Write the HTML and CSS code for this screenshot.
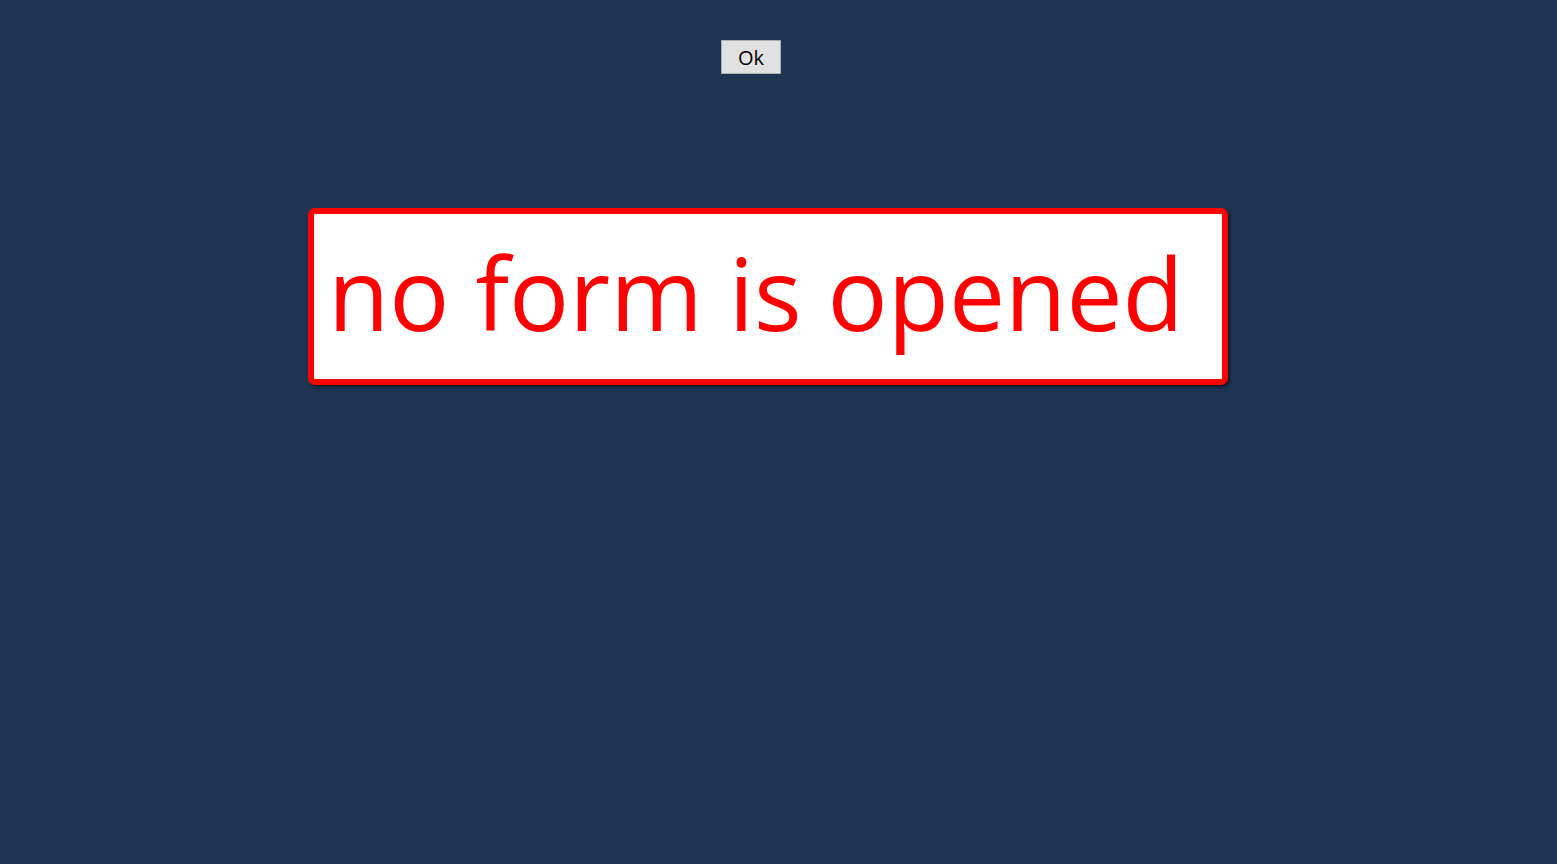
FILE: index.html
```html
<!DOCTYPE html>
<html>
<head>
<meta charset="utf-8">
<link rel="stylesheet" href="styles.css">
</head>
<body>
<div class="page">
  <div class="toolbar">
    <button class="ok-btn">Ok</button>
  </div>
  <div class="message">
    <div class="message-text">no form is opened</div>
  </div>
</div>
</body>
</html>
```
FILE: styles.css
```css
html, body {
  margin: 0;
  padding: 0;
  background: #1e3552;
  height: 100%;
}
.page {
  display: flex;
  flex-direction: column;
  align-items: flex-start;
  padding-top: 40px;
}
.toolbar {
  padding-left: 721px;
}
.ok-btn {
  width: 60px;
  height: 34px;
  margin: 0;
  padding: 0;
  background: #e1e1e1;
  border: 1px solid #adadad;
  border-radius: 0;
  font-family: "Open Sans", "Noto Sans", sans-serif;
  font-size: 20px;
  color: #000;
  line-height: 32px;
  padding-top: 1px;
}
.message {
  margin-top: 134px;
  margin-left: 308px;
  width: 894px;
  height: 165px;
  border: 6px solid #ff0000;
  border-radius: 7px;
  background: #fff;
  box-shadow: 2px 2px 3px rgba(0,0,0,0.55);
  padding-left: 14px;
  box-sizing: content-box;
  overflow: hidden;
}
.message-text {
  font-family: "Open Sans", "Noto Sans", sans-serif;
  font-size: 100px;
  color: #ff0000;
  line-height: 1;
  white-space: nowrap;
  padding-top: 28px;
}
```
